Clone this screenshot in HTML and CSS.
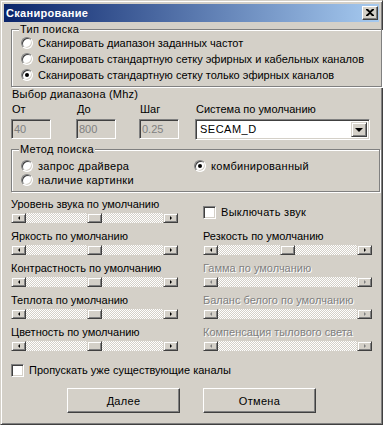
FILE: index.html
```html
<!DOCTYPE html>
<html lang="ru">
<head>
<meta charset="utf-8">
<link rel="stylesheet" href="styles.css">
</head>
<body>
<div class="window">
  <div class="titlebar">
    <span class="title">Сканирование</span>
    <span class="close"><svg width="8" height="7" viewBox="0 0 8 7"><path d="M0 0h2l2 2 2-2h2v1L5 3.5 8 6v1H6L4 5 2 7H0V6l3-2.5L0 1z" fill="#000"/></svg></span>
  </div>
  <div class="body">
    <div class="group g1">
      <span class="group-label">Тип поиска</span>
      <div class="opt"><span class="radio"></span>Сканировать диапазон заданных частот</div>
      <div class="opt"><span class="radio"></span>Сканировать стандартную сетку эфирных и кабельных каналов</div>
      <div class="opt"><span class="radio on"></span>Сканировать стандартную сетку только эфирных каналов</div>
    </div>

    <div class="range-title">Выбор диапазона (Mhz)</div>
    <div class="range-grid">
      <div class="field"><div class="lbl">От</div><div class="edit">40</div></div>
      <div class="field"><div class="lbl">До</div><div class="edit">800</div></div>
      <div class="field"><div class="lbl">Шаг</div><div class="edit">0.25</div></div>
      <div class="field"><div class="lbl">Система по умолчанию</div>
        <div class="combo"><span class="combo-text">SECAM_D</span><span class="drop"><span class="tri-down"></span></span></div>
      </div>
    </div>

    <div class="group g2">
      <span class="group-label">Метод поиска</span>
      <div class="opt2"><span class="radio"></span>запрос драйвера</div>
      <div class="opt2"><span class="radio on"></span>комбинированный</div>
      <div class="opt2"><span class="radio"></span>наличие картинки</div>
    </div>

    <div class="sliders">
      <div class="cell"><div class="slbl">Уровень звука по умолчанию</div><div class="sb"><span class="sbtn l"></span><span class="track"><span class="thumb"></span></span><span class="sbtn r"></span></div></div>
      <div class="cell chk-cell"><div class="chk-row wide"><span class="check"></span>Выключать звук</div></div>

      <div class="cell"><div class="slbl">Яркость по умолчанию</div><div class="sb"><span class="sbtn l"></span><span class="track"><span class="thumb"></span></span><span class="sbtn r"></span></div></div>
      <div class="cell"><div class="slbl">Резкость по умолчанию</div><div class="sb"><span class="sbtn l"></span><span class="track"><span class="thumb"></span></span><span class="sbtn r"></span></div></div>

      <div class="cell"><div class="slbl">Контрастность по умолчанию</div><div class="sb"><span class="sbtn l"></span><span class="track"><span class="thumb"></span></span><span class="sbtn r"></span></div></div>
      <div class="cell dis"><div class="slbl">Гамма по умолчанию</div><div class="sb"><span class="sbtn l"></span><span class="track"></span><span class="sbtn r"></span></div></div>

      <div class="cell"><div class="slbl">Теплота по умолчанию</div><div class="sb"><span class="sbtn l"></span><span class="track"><span class="thumb"></span></span><span class="sbtn r"></span></div></div>
      <div class="cell dis"><div class="slbl">Баланс белого по умолчанию</div><div class="sb"><span class="sbtn l"></span><span class="track"></span><span class="sbtn r"></span></div></div>

      <div class="cell"><div class="slbl">Цветность по умолчанию</div><div class="sb"><span class="sbtn l"></span><span class="track"><span class="thumb"></span></span><span class="sbtn r"></span></div></div>
      <div class="cell dis"><div class="slbl">Компенсация тылового света</div><div class="sb"><span class="sbtn l"></span><span class="track"></span><span class="sbtn r"></span></div></div>
    </div>

    <div class="chk-row bottom-chk"><span class="check"></span>Пропускать уже существующие каналы</div>

    <div class="buttons">
      <div class="btn">Далее</div>
      <div class="btn">Отмена</div>
    </div>
  </div>
</div>
</body>
</html>
```

FILE: styles.css
```css
html, body {
  margin: 0;
  padding: 0;
  background: #D4D0C8;
}
body {
  font-family: "Liberation Sans", Arial, sans-serif;
  font-size: 11px;
  color: #000;
}
.window {
  width: 383px;
  height: 425px;
  box-sizing: border-box;
  background: #D4D0C8;
  border: 1px solid;
  border-color: #D4D0C8 #404040 #404040 #D4D0C8;
  box-shadow: inset 1px 1px 0 #fff, inset -1px -1px 0 #808080;
  padding: 3px;
  display: flex;
  flex-direction: column;
}
.titlebar {
  height: 18px;
  background: linear-gradient(to right, #0A246A, #A6CAF0);
  display: flex;
  align-items: center;
  justify-content: space-between;
  padding-left: 2px;
  padding-right: 1px;
}
.title {
  color: #fff;
  font-weight: bold;
  font-size: 11px;
  letter-spacing: 0.3px;
  line-height: 14px;
}
.close {
  width: 16px;
  height: 14px;
  box-sizing: border-box;
  background: #D4D0C8;
  border: 1px solid;
  border-color: #fff #404040 #404040 #fff;
  box-shadow: inset -1px -1px 0 #808080;
  display: flex;
  align-items: center;
  justify-content: center;
  padding-bottom: 1px;
}
.body {
  padding: 0 7px;
  display: flex;
  flex-direction: column;
}
.group {
  position: relative;
  border: 1px solid #808080;
  box-shadow: 1px 1px 0 #fff, inset 1px 1px 0 #fff;
}
.group-label {
  position: absolute;
  top: -8px;
  left: 7px;
  background: #D4D0C8;
  padding: 0 1px;
  line-height: 14px;
  letter-spacing: 0.3px;
}
.g1 {
  margin-top: 7px;
  width: 360px;
  padding: 5px 0 3px 9px;
}
.opt {
  height: 16px;
  display: flex;
  align-items: center;
  white-space: nowrap;
}
.radio {
  width: 12px;
  height: 12px;
  box-sizing: border-box;
  border-radius: 50%;
  background: #fff;
  border: 1px solid;
  border-color: #808080 #fff #fff #808080;
  box-shadow: inset 1px 1px 0 #404040, inset -1px -1px 0 #D4D0C8;
  margin-right: 5px;
  flex: none;
  display: flex;
  align-items: center;
  justify-content: center;
}
.radio.on::after {
  content: "";
  width: 4px;
  height: 4px;
  border-radius: 50%;
  background: #000;
}
.range-title {
  margin-top: 1px;
  line-height: 13px;
  padding-left: 1px;
  letter-spacing: 0.2px;
}
.range-grid {
  margin-top: 2px;
  display: grid;
  grid-template-columns: 65px 63px 56px 175px;
}
.lbl {
  line-height: 13px;
  padding-left: 1px;
  margin-bottom: 3px;
  white-space: nowrap;
}
.edit {
  width: 40px;
  height: 20px;
  box-sizing: border-box;
  border: 1px solid;
  border-color: #808080 #fff #fff #808080;
  box-shadow: inset 1px 1px 0 #404040, inset -1px -1px 0 #D4D0C8;
  color: #808080;
  padding: 3px 2px;
  line-height: 13px;
}
.combo {
  width: 175px;
  height: 21px;
  box-sizing: border-box;
  border: 1px solid;
  border-color: #808080 #fff #fff #808080;
  box-shadow: inset 1px 1px 0 #404040, inset -1px -1px 0 #D4D0C8;
  background: #fff;
  display: flex;
  align-items: stretch;
  padding: 2px;
}
.combo-text {
  flex: 1;
  padding-left: 2px;
  line-height: 15px;
  letter-spacing: 0.5px;
}
.drop {
  width: 16px;
  box-sizing: border-box;
  background: #D4D0C8;
  border: 1px solid;
  border-color: #D4D0C8 #404040 #404040 #D4D0C8;
  box-shadow: inset 1px 1px 0 #fff, inset -1px -1px 0 #808080;
  display: flex;
  align-items: center;
  justify-content: center;
}
.tri-down {
  width: 0;
  height: 0;
  border-style: solid;
  border-width: 4px 4px 0 4px;
  border-color: #000 transparent transparent transparent;
}
.g2 {
  margin-top: 9px;
  width: 358px;
  padding: 9px 0 4px 9px;
  display: grid;
  grid-template-columns: 173px 1fr;
}
.opt2 {
  height: 14px;
  display: flex;
  align-items: center;
  white-space: nowrap;
  letter-spacing: 0.3px;
}
.sliders {
  margin-top: 5px;
  display: grid;
  grid-template-columns: 167px 169px;
  column-gap: 25px;
  row-gap: 6px;
}
.slbl {
  line-height: 14px;
  margin-bottom: 2px;
  white-space: nowrap;
}
.dis .slbl {
  color: #808080;
  text-shadow: 1px 1px 0 #fff;
}
.sb {
  height: 10px;
  display: flex;
}
.sbtn, .thumb {
  width: 15px;
  height: 10px;
  box-sizing: border-box;
  background: #D4D0C8;
  border: 1px solid;
  border-color: #D4D0C8 #404040 #404040 #D4D0C8;
  box-shadow: inset 1px 1px 0 #fff, inset -1px -1px 0 #808080;
  flex: none;
  display: flex;
  align-items: center;
  justify-content: center;
}
.sbtn::after {
  content: "";
  width: 0;
  height: 0;
  border-style: solid;
}
.sbtn.l::after {
  border-width: 2px 2px 2px 0;
  border-color: transparent #000 transparent transparent;
}
.sbtn.r::after {
  border-width: 2px 0 2px 2px;
  border-color: transparent transparent transparent #000;
}
.dis .sbtn.l::after {
  border-color: transparent #808080 transparent transparent;
}
.dis .sbtn.r::after {
  border-color: transparent transparent transparent #808080;
}
.track {
  flex: 1;
  background: repeating-conic-gradient(#fff 0 25%, #D4D0C8 0 50%) 0 0 / 2px 2px;
  display: flex;
  justify-content: center;
}
.chk-cell {
  display: flex;
  align-items: center;
  padding-top: 4px;
}
.chk-row {
  display: flex;
  align-items: center;
  line-height: 14px;
  white-space: nowrap;
}
.chk-row.wide {
  letter-spacing: 0.3px;
}
.check {
  width: 13px;
  height: 13px;
  box-sizing: border-box;
  background: #fff;
  border: 1px solid;
  border-color: #808080 #fff #fff #808080;
  box-shadow: inset 1px 1px 0 #404040, inset -1px -1px 0 #D4D0C8;
  margin-right: 5px;
  flex: none;
}
.bottom-chk {
  margin-top: 12px;
}
.buttons {
  margin-top: 11px;
  display: flex;
  justify-content: center;
  gap: 23px;
}
.btn {
  width: 113px;
  height: 25px;
  box-sizing: border-box;
  border: 1px solid;
  border-color: #fff #404040 #404040 #fff;
  box-shadow: inset -1px -1px 0 #808080;
  display: flex;
  align-items: center;
  justify-content: center;
  letter-spacing: 0.3px;
}
```
